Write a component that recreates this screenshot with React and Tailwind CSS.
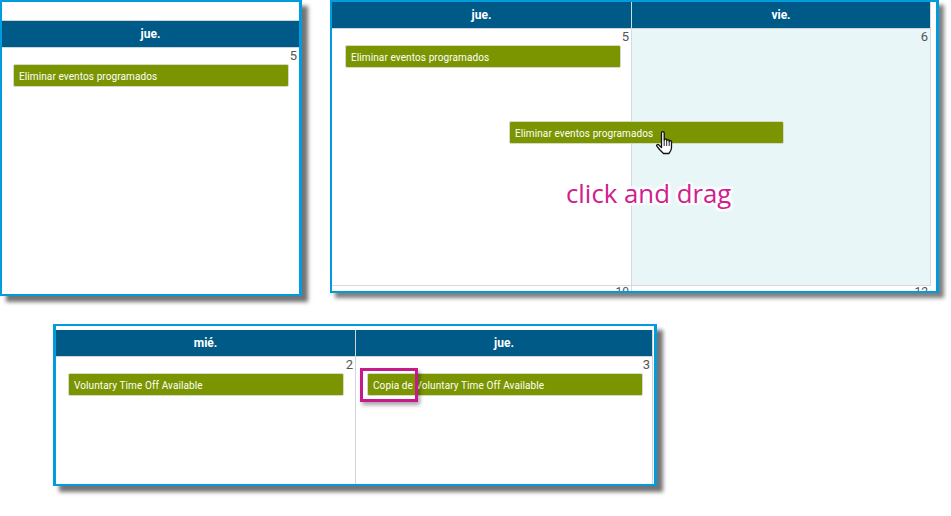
function EventBar({ children, className = '' }) {
  return (
    <div className={`h-[23px] flex items-center pl-[5px] pt-[1px] bg-[#7a9500] border border-[#d5d9c8] rounded-[2px] text-white text-[10px] tracking-[0.1px] whitespace-nowrap ${className}`}>
      {children}
    </div>
  )
}

function DayHeader({ label, className = '' }) {
  return (
    <div className={`flex items-center justify-center bg-[#005a87] text-white text-[12px] font-bold ${className}`}>
      {label}
    </div>
  )
}

function DayNumber({ value }) {
  return <div className="absolute top-[1px] right-[2px] text-[13px] leading-[13px] text-[#555]">{value}</div>
}

function HandCursor() {
  return (
    <svg width="18" height="24" viewBox="0 0 18 24" className="absolute left-[656px] top-[131px]">
      <path
        d="M5.5 2c0-1.8 2.7-1.8 2.7 0v7c0-1.5 2.5-1.5 2.5 0v.8c0-1.5 2.5-1.5 2.5 0v.9c0-1.4 2.3-1.4 2.3.2v5.6c0 2.5-1 3.6-2 5l-.5 1H7.5L3.5 18.5.9 15.2c-.8-1.2.6-2.3 1.7-1.4L5.5 16.5z"
        fill="#fff"
        stroke="#111"
        strokeWidth="1.3"
        strokeLinejoin="round"
      />
      <path d="M8.2 9v6M10.7 10v5M13.2 10.5v4.5" stroke="#111" strokeWidth="0.9" fill="none" />
    </svg>
  )
}

export default function App() {
  return (
    <div className="relative w-[951px] h-[516px] overflow-hidden bg-white font-['Roboto',sans-serif]">
      <div className="flex items-start">
        {/* single day */}
        <div className="w-[302px] h-[296px] pt-[18px] border-2 border-r-[3px] border-[#009cde] shadow-[6px_6px_4px_rgba(0,0,0,0.55)] bg-white">
          <DayHeader label="jue." className="h-[28px] border-y border-[#d0d5d8]" />
          <div className="relative pt-[16px] pl-[11px] pr-[10px]">
            <DayNumber value="5" />
            <EventBar>Eliminar eventos programados</EventBar>
          </div>
        </div>

        {/* drag between days */}
        <div className="flex flex-col w-[609px] h-[293px] ml-[28px] pr-[5px] overflow-hidden border-2 border-r-[3px] border-[#009cde] shadow-[5px_5px_4px_rgba(0,0,0,0.5)] bg-white">
          <div className="flex flex-1 min-h-0">
            <div className="w-[300px] border-r border-[#cfdde2]">
              <DayHeader label="jue." className="h-[27px] border-b border-[#d0d5d8]" />
              <div className="relative pt-[16px] pl-[13px] pr-[10px]">
                <DayNumber value="5" />
                <EventBar>Eliminar eventos programados</EventBar>
              </div>
            </div>
            <div className="flex-1 flex flex-col border-r border-[#d5dadc]">
              <DayHeader label="vie." className="h-[27px] border-b border-[#d0d5d8]" />
              <div className="relative flex-1 bg-[#e8f6f8]">
                <DayNumber value="6" />
              </div>
            </div>
          </div>
          <div className="flex h-[6px] border-t border-[#d5dadc] text-[12px] leading-[12px] text-[#555]">
            <div className="w-[300px] pr-[2px] text-right border-r border-[#d5dadc]">10</div>
            <div className="flex-1 pr-[3px] text-right">12</div>
          </div>
        </div>
      </div>

      {/* copied event */}
      <div className="flex w-[604px] h-[162px] mt-[28px] ml-[53px] pt-[4px] pr-[1px] border-2 border-r-[3px] border-l-[3px] border-[#009cde] shadow-[6px_6px_4px_rgba(0,0,0,0.55)] bg-white">
        <div className="w-[300px] border-r border-[#d0d5d8]">
          <DayHeader label="mié." className="h-[27px] border-b border-[#d0d5d8]" />
          <div className="relative pt-[16px] pl-[12px] pr-[11px]">
            <DayNumber value="2" />
            <EventBar>Voluntary Time Off Available</EventBar>
          </div>
        </div>
        <div className="flex-1 border-r border-[#d0d5d8]">
          <DayHeader label="jue." className="h-[27px] border-b border-[#d0d5d8]" />
          <div className="relative pt-[16px] pl-[11px] pr-[9px]">
            <DayNumber value="3" />
            <EventBar>Copia de Voluntary Time Off Available</EventBar>
          </div>
        </div>
      </div>

      {/* overlays */}
      <EventBar className="absolute left-[509px] top-[121px] w-[275px]">Eliminar eventos programados</EventBar>
      <HandCursor />
      <div className="absolute left-[566px] top-[175px] text-[25.8px] leading-[36px] text-[#d0208e] font-['Open_Sans',sans-serif] [text-shadow:2px_0_2px_#fff,-2px_0_2px_#fff,0_2px_2px_#fff,0_-2px_2px_#fff,2px_2px_2px_#fff,-2px_-2px_2px_#fff,2px_-2px_2px_#fff,-2px_2px_2px_#fff]">
        click and drag
      </div>
      <div className="absolute left-[360px] top-[368px] w-[58px] h-[34px] border-[3px] border-[#c6198a] shadow-[2px_3px_4px_rgba(0,0,0,0.35)]" />
    </div>
  )
}
